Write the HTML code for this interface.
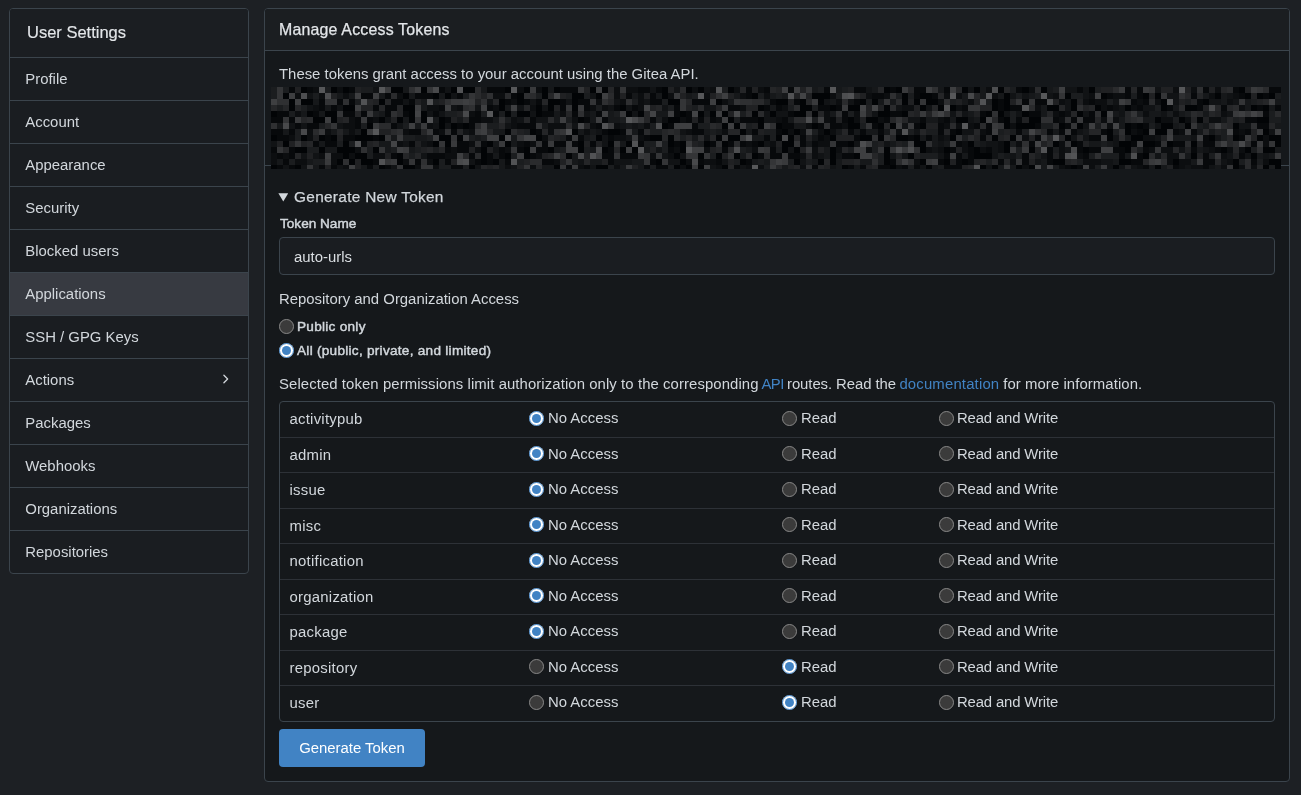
<!DOCTYPE html>
<html>
<head>
<meta charset="utf-8">
<style>
html,body{margin:0;padding:0}
body{width:1301px;height:795px;overflow:hidden;background:#1d2024;font-family:"Liberation Sans",sans-serif;color:#d2d7dc;position:relative;font-size:14.9px}
#wrap{position:absolute;left:0;top:0;width:1301px;height:795px;will-change:transform}
.abs{position:absolute}
/* sidebar */
#menu{left:9px;top:8px;width:238px;height:564px;border:1px solid #3b444c;border-radius:4px;background:#1a1d21;overflow:hidden}
#menu .hd{height:48px;line-height:46px;padding-left:17px;font-size:16.5px;-webkit-text-stroke:0.15px #e3e6e9;color:#e3e6e9;background:#1b1e22}
#menu .it{height:42px;border-top:1px solid #3b444c;line-height:42px;padding-left:15.3px;font-size:14.9px;color:#d2d7dc;position:relative}
#menu .it.act{background:#373a41}
#menu .chev{position:absolute;left:207.8px;top:12.7px}
/* main */
#main{left:264px;top:8px;width:1024px;height:772px;border:1px solid #3b444c;border-radius:4px;background:#15181b;overflow:hidden}
#main .hd{height:41px;border-bottom:1px solid #3b444c;background:#1b1e21;line-height:41px;padding-left:14px;font-size:15.9px;letter-spacing:0.2px;-webkit-text-stroke:0.25px #e3e6e9;color:#e3e6e9}
.txt{position:absolute;white-space:nowrap;line-height:16px}
#mos{position:absolute;left:6px;top:78px}
#sep{position:absolute;left:0;top:156px;width:1024px;height:1px;background:#3b444c}
#seg1{position:absolute;left:0;top:42px;width:1024px;height:114px;background:#15181b}
.input{position:absolute;left:14px;top:228px;width:994px;height:36px;border:1px solid #3b444c;border-radius:4px;background:#1a1d21}
input[type=radio]{color-scheme:dark;accent-color:#4183c4;width:15px;height:15px;margin:0;position:absolute}
#tbl{position:absolute;left:14px;top:392px;width:994px;height:319px;border:1px solid #3b444c;border-radius:4px;background:#15181b}
.sep{position:absolute;left:0;width:994px;height:1px;background:#2d3137}
.btn{position:absolute;left:14px;top:720px;width:146px;height:38px;border-radius:4px;background:#4183c4;color:#fff;font-size:14.9px;line-height:38px;text-align:center}
a{color:#4183c4;text-decoration:none}
</style>
</head>
<body>
<div id="wrap">
<div id="menu" class="abs">
  <div class="hd">User Settings</div>
  <div class="it">Profile</div>
  <div class="it">Account</div>
  <div class="it">Appearance</div>
  <div class="it">Security</div>
  <div class="it">Blocked users</div>
  <div class="it act">Applications</div>
  <div class="it">SSH / GPG Keys</div>
  <div class="it">Actions<svg class="chev" width="14" height="14" viewBox="0 0 16 16"><path fill="#d2d7dc" d="M6.22 3.22a.75.75 0 0 1 1.06 0l4.25 4.25a.75.75 0 0 1 0 1.06l-4.25 4.25a.751.751 0 0 1-1.042-.018.751.751 0 0 1-.018-1.042L9.94 8 6.22 4.28a.75.75 0 0 1 0-1.06Z"/></svg></div>
  <div class="it">Packages</div>
  <div class="it">Webhooks</div>
  <div class="it">Organizations</div>
  <div class="it">Repositories</div>
</div>
<div id="main" class="abs">
  <div class="hd">Manage Access Tokens</div>
  <div id="seg1"></div>
  <div class="txt" style="left:14px;top:57px">These tokens grant access to your account using the Gitea API.</div>
  <div id="sep"></div>
  <div id="mos"><svg width="1010" height="82" viewBox="0 0 168 13.6667" preserveAspectRatio="none" shape-rendering="crispEdges" style="display:block"><path fill="#020406" d="M5 0h1v1h-1zM10 0h1v1h-1zM12 0h1v1h-1zM20 0h1v1h-1zM21 0h1v1h-1zM25 0h1v1h-1zM30 0h1v1h-1zM32 0h1v1h-1zM33 0h1v1h-1zM39 0h1v1h-1zM42 0h1v1h-1zM45 0h1v1h-1zM47 0h1v1h-1zM53 0h1v1h-1zM55 0h1v1h-1zM65 0h1v1h-1zM69 0h1v1h-1zM71 0h1v1h-1zM76 0h1v1h-1zM102 0h1v1h-1zM104 0h1v1h-1zM115 0h1v1h-1zM117 0h1v1h-1zM121 0h1v1h-1zM125 0h1v1h-1zM128 0h1v1h-1zM136 0h1v1h-1zM161 0h1v1h-1zM2 1h1v1h-1zM22 1h1v1h-1zM27 1h1v1h-1zM29 1h1v1h-1zM41 1h1v1h-1zM45 1h1v1h-1zM50 1h1v1h-1zM51 1h1v1h-1zM54 1h1v1h-1zM65 1h1v1h-1zM80 1h1v1h-1zM90 1h1v1h-1zM91 1h1v1h-1zM92 1h1v1h-1zM105 1h1v1h-1zM108 1h1v1h-1zM109 1h1v1h-1zM122 1h1v1h-1zM132 1h1v1h-1zM138 1h1v1h-1zM145 1h1v1h-1zM147 1h1v1h-1zM157 1h1v1h-1zM162 1h1v1h-1zM164 1h1v1h-1zM166 1h1v1h-1zM3 2h1v1h-1zM5 2h1v1h-1zM6 2h1v1h-1zM18 2h1v1h-1zM38 2h1v1h-1zM41 2h1v1h-1zM46 2h1v1h-1zM47 2h1v1h-1zM50 2h1v1h-1zM66 2h1v1h-1zM67 2h1v1h-1zM74 2h1v1h-1zM84 2h1v1h-1zM85 2h1v1h-1zM88 2h1v1h-1zM91 2h1v1h-1zM98 2h1v1h-1zM100 2h1v1h-1zM105 2h1v1h-1zM107 2h1v1h-1zM109 2h1v1h-1zM110 2h1v1h-1zM120 2h1v1h-1zM122 2h1v1h-1zM133 2h1v1h-1zM148 2h1v1h-1zM155 2h1v1h-1zM3 3h1v1h-1zM12 3h1v1h-1zM13 3h1v1h-1zM22 3h1v1h-1zM23 3h1v1h-1zM38 3h1v1h-1zM44 3h1v1h-1zM46 3h1v1h-1zM50 3h1v1h-1zM58 3h1v1h-1zM81 3h1v1h-1zM88 3h1v1h-1zM89 3h1v1h-1zM93 3h1v1h-1zM96 3h1v1h-1zM97 3h1v1h-1zM102 3h1v1h-1zM108 3h1v1h-1zM111 3h1v1h-1zM113 3h1v1h-1zM120 3h1v1h-1zM122 3h1v1h-1zM129 3h1v1h-1zM130 3h1v1h-1zM133 3h1v1h-1zM137 3h1v1h-1zM142 3h1v1h-1zM148 3h1v1h-1zM152 3h1v1h-1zM153 3h1v1h-1zM163 3h1v1h-1zM165 3h1v1h-1zM0 4h1v1h-1zM6 4h1v1h-1zM9 4h1v1h-1zM10 4h1v1h-1zM23 4h1v1h-1zM25 4h1v1h-1zM39 4h1v1h-1zM41 4h1v1h-1zM42 4h1v1h-1zM44 4h1v1h-1zM59 4h1v1h-1zM61 4h1v1h-1zM68 4h1v1h-1zM71 4h1v1h-1zM73 4h1v1h-1zM75 4h1v1h-1zM80 4h1v1h-1zM83 4h1v1h-1zM87 4h1v1h-1zM88 4h1v1h-1zM90 4h1v1h-1zM101 4h1v1h-1zM102 4h1v1h-1zM105 4h1v1h-1zM119 4h1v1h-1zM121 4h1v1h-1zM125 4h1v1h-1zM134 4h1v1h-1zM138 4h1v1h-1zM7 5h1v1h-1zM8 5h1v1h-1zM10 5h1v1h-1zM18 5h1v1h-1zM21 5h1v1h-1zM23 5h1v1h-1zM25 5h1v1h-1zM28 5h1v1h-1zM51 5h1v1h-1zM66 5h1v1h-1zM67 5h1v1h-1zM76 5h1v1h-1zM81 5h1v1h-1zM96 5h1v1h-1zM99 5h1v1h-1zM100 5h1v1h-1zM114 5h1v1h-1zM115 5h1v1h-1zM118 5h1v1h-1zM122 5h1v1h-1zM126 5h1v1h-1zM127 5h1v1h-1zM147 5h1v1h-1zM151 5h1v1h-1zM154 5h1v1h-1zM164 5h1v1h-1zM165 5h1v1h-1zM16 6h1v1h-1zM28 6h1v1h-1zM30 6h1v1h-1zM32 6h1v1h-1zM65 6h1v1h-1zM75 6h1v1h-1zM77 6h1v1h-1zM81 6h1v1h-1zM84 6h1v1h-1zM90 6h1v1h-1zM96 6h1v1h-1zM97 6h1v1h-1zM101 6h1v1h-1zM103 6h1v1h-1zM108 6h1v1h-1zM122 6h1v1h-1zM124 6h1v1h-1zM125 6h1v1h-1zM126 6h1v1h-1zM131 6h1v1h-1zM134 6h1v1h-1zM142 6h1v1h-1zM144 6h1v1h-1zM148 6h1v1h-1zM149 6h1v1h-1zM152 6h1v1h-1zM160 6h1v1h-1zM15 7h1v1h-1zM39 7h1v1h-1zM43 7h1v1h-1zM50 7h1v1h-1zM56 7h1v1h-1zM57 7h1v1h-1zM78 7h1v1h-1zM85 7h1v1h-1zM87 7h1v1h-1zM92 7h1v1h-1zM114 7h1v1h-1zM139 7h1v1h-1zM142 7h1v1h-1zM145 7h1v1h-1zM147 7h1v1h-1zM148 7h1v1h-1zM165 7h1v1h-1zM0 8h1v1h-1zM5 8h1v1h-1zM8 8h1v1h-1zM10 8h1v1h-1zM14 8h1v1h-1zM15 8h1v1h-1zM16 8h1v1h-1zM18 8h1v1h-1zM28 8h1v1h-1zM29 8h1v1h-1zM31 8h1v1h-1zM38 8h1v1h-1zM44 8h1v1h-1zM54 8h1v1h-1zM63 8h1v1h-1zM64 8h1v1h-1zM66 8h1v1h-1zM74 8h1v1h-1zM76 8h1v1h-1zM77 8h1v1h-1zM84 8h1v1h-1zM86 8h1v1h-1zM93 8h1v1h-1zM98 8h1v1h-1zM99 8h1v1h-1zM101 8h1v1h-1zM104 8h1v1h-1zM105 8h1v1h-1zM107 8h1v1h-1zM113 8h1v1h-1zM120 8h1v1h-1zM123 8h1v1h-1zM132 8h1v1h-1zM139 8h1v1h-1zM143 8h1v1h-1zM144 8h1v1h-1zM156 8h1v1h-1zM160 8h1v1h-1zM164 8h1v1h-1zM166 8h1v1h-1zM167 8h1v1h-1zM2 9h1v1h-1zM12 9h1v1h-1zM27 9h1v1h-1zM29 9h1v1h-1zM36 9h1v1h-1zM39 9h1v1h-1zM51 9h1v1h-1zM56 9h1v1h-1zM59 9h1v1h-1zM66 9h1v1h-1zM68 9h1v1h-1zM72 9h1v1h-1zM75 9h1v1h-1zM81 9h1v1h-1zM85 9h1v1h-1zM86 9h1v1h-1zM96 9h1v1h-1zM107 9h1v1h-1zM108 9h1v1h-1zM116 9h1v1h-1zM122 9h1v1h-1zM130 9h1v1h-1zM133 9h1v1h-1zM141 9h1v1h-1zM142 9h1v1h-1zM145 9h1v1h-1zM146 9h1v1h-1zM149 9h1v1h-1zM153 9h1v1h-1zM167 9h1v1h-1zM4 10h1v1h-1zM5 10h1v1h-1zM8 10h1v1h-1zM11 10h1v1h-1zM12 10h1v1h-1zM13 10h1v1h-1zM17 10h1v1h-1zM35 10h1v1h-1zM42 10h1v1h-1zM46 10h1v1h-1zM51 10h1v1h-1zM55 10h1v1h-1zM58 10h1v1h-1zM60 10h1v1h-1zM68 10h1v1h-1zM85 10h1v1h-1zM87 10h1v1h-1zM93 10h1v1h-1zM102 10h1v1h-1zM108 10h1v1h-1zM112 10h1v1h-1zM117 10h1v1h-1zM122 10h1v1h-1zM126 10h1v1h-1zM135 10h1v1h-1zM142 10h1v1h-1zM158 10h1v1h-1zM162 10h1v1h-1zM165 10h1v1h-1zM166 10h1v1h-1zM12 11h1v1h-1zM14 11h1v1h-1zM15 11h1v1h-1zM21 11h1v1h-1zM35 11h1v1h-1zM39 11h1v1h-1zM42 11h1v1h-1zM49 11h1v1h-1zM67 11h1v1h-1zM71 11h1v1h-1zM74 11h1v1h-1zM77 11h1v1h-1zM80 11h1v1h-1zM93 11h1v1h-1zM97 11h1v1h-1zM102 11h1v1h-1zM106 11h1v1h-1zM117 11h1v1h-1zM118 11h1v1h-1zM119 11h1v1h-1zM145 11h1v1h-1zM153 11h1v1h-1zM163 11h1v1h-1zM11 12h1v1h-1zM13 12h1v1h-1zM15 12h1v1h-1zM16 12h1v1h-1zM21 12h1v1h-1zM27 12h1v1h-1zM35 12h1v1h-1zM37 12h1v1h-1zM64 12h1v1h-1zM68 12h1v1h-1zM78 12h1v1h-1zM87 12h1v1h-1zM91 12h1v1h-1zM93 12h1v1h-1zM102 12h1v1h-1zM108 12h1v1h-1zM112 12h1v1h-1zM115 12h1v1h-1zM130 12h1v1h-1zM131 12h1v1h-1zM141 12h1v1h-1zM142 12h1v1h-1zM150 12h1v1h-1zM160 12h1v1h-1zM166 12h1v1h-1zM167 12h1v1h-1zM0 13h1v1h-1zM4 13h1v1h-1zM18 13h1v1h-1zM22 13h1v1h-1zM23 13h1v1h-1zM33 13h1v1h-1zM47 13h1v1h-1zM54 13h1v1h-1zM55 13h1v1h-1zM67 13h1v1h-1zM69 13h1v1h-1zM71 13h1v1h-1zM75 13h1v1h-1zM95 13h1v1h-1zM103 13h1v1h-1zM109 13h1v1h-1zM118 13h1v1h-1zM120 13h1v1h-1zM124 13h1v1h-1zM126 13h1v1h-1zM133 13h1v1h-1zM140 13h1v1h-1zM147 13h1v1h-1zM160 13h1v1h-1zM165 13h1v1h-1zM167 13h1v1h-1z"/><path fill="#07090b" d="M3 0h1v1h-1zM6 0h1v1h-1zM13 0h1v1h-1zM28 0h1v1h-1zM36 0h1v1h-1zM37 0h1v1h-1zM38 0h1v1h-1zM48 0h1v1h-1zM49 0h1v1h-1zM50 0h1v1h-1zM61 0h1v1h-1zM62 0h1v1h-1zM64 0h1v1h-1zM79 0h1v1h-1zM82 0h1v1h-1zM86 0h1v1h-1zM92 0h1v1h-1zM97 0h1v1h-1zM98 0h1v1h-1zM103 0h1v1h-1zM107 0h1v1h-1zM108 0h1v1h-1zM112 0h1v1h-1zM124 0h1v1h-1zM134 0h1v1h-1zM142 0h1v1h-1zM144 0h1v1h-1zM155 0h1v1h-1zM160 0h1v1h-1zM166 0h1v1h-1zM167 0h1v1h-1zM15 1h1v1h-1zM16 1h1v1h-1zM19 1h1v1h-1zM24 1h1v1h-1zM25 1h1v1h-1zM26 1h1v1h-1zM31 1h1v1h-1zM40 1h1v1h-1zM59 1h1v1h-1zM63 1h1v1h-1zM79 1h1v1h-1zM100 1h1v1h-1zM101 1h1v1h-1zM107 1h1v1h-1zM110 1h1v1h-1zM139 1h1v1h-1zM142 1h1v1h-1zM144 1h1v1h-1zM153 1h1v1h-1zM161 1h1v1h-1zM165 1h1v1h-1zM8 2h1v1h-1zM11 2h1v1h-1zM13 2h1v1h-1zM20 2h1v1h-1zM21 2h1v1h-1zM23 2h1v1h-1zM39 2h1v1h-1zM42 2h1v1h-1zM44 2h1v1h-1zM48 2h1v1h-1zM51 2h1v1h-1zM52 2h1v1h-1zM63 2h1v1h-1zM64 2h1v1h-1zM70 2h1v1h-1zM71 2h1v1h-1zM72 2h1v1h-1zM83 2h1v1h-1zM87 2h1v1h-1zM97 2h1v1h-1zM121 2h1v1h-1zM125 2h1v1h-1zM127 2h1v1h-1zM128 2h1v1h-1zM136 2h1v1h-1zM143 2h1v1h-1zM145 2h1v1h-1zM154 2h1v1h-1zM8 3h1v1h-1zM10 3h1v1h-1zM17 3h1v1h-1zM19 3h1v1h-1zM20 3h1v1h-1zM28 3h1v1h-1zM36 3h1v1h-1zM48 3h1v1h-1zM52 3h1v1h-1zM57 3h1v1h-1zM60 3h1v1h-1zM67 3h1v1h-1zM76 3h1v1h-1zM77 3h1v1h-1zM82 3h1v1h-1zM84 3h1v1h-1zM91 3h1v1h-1zM92 3h1v1h-1zM94 3h1v1h-1zM115 3h1v1h-1zM121 3h1v1h-1zM123 3h1v1h-1zM124 3h1v1h-1zM139 3h1v1h-1zM144 3h1v1h-1zM149 3h1v1h-1zM154 3h1v1h-1zM158 3h1v1h-1zM164 3h1v1h-1zM167 3h1v1h-1zM1 4h1v1h-1zM2 4h1v1h-1zM7 4h1v1h-1zM12 4h1v1h-1zM13 4h1v1h-1zM15 4h1v1h-1zM19 4h1v1h-1zM22 4h1v1h-1zM27 4h1v1h-1zM34 4h1v1h-1zM37 4h1v1h-1zM45 4h1v1h-1zM46 4h1v1h-1zM50 4h1v1h-1zM54 4h1v1h-1zM67 4h1v1h-1zM69 4h1v1h-1zM86 4h1v1h-1zM95 4h1v1h-1zM103 4h1v1h-1zM104 4h1v1h-1zM118 4h1v1h-1zM126 4h1v1h-1zM127 4h1v1h-1zM131 4h1v1h-1zM136 4h1v1h-1zM165 4h1v1h-1zM0 5h1v1h-1zM1 5h1v1h-1zM3 5h1v1h-1zM14 5h1v1h-1zM16 5h1v1h-1zM29 5h1v1h-1zM33 5h1v1h-1zM34 5h1v1h-1zM43 5h1v1h-1zM52 5h1v1h-1zM55 5h1v1h-1zM63 5h1v1h-1zM69 5h1v1h-1zM71 5h1v1h-1zM73 5h1v1h-1zM78 5h1v1h-1zM79 5h1v1h-1zM80 5h1v1h-1zM85 5h1v1h-1zM93 5h1v1h-1zM95 5h1v1h-1zM102 5h1v1h-1zM108 5h1v1h-1zM112 5h1v1h-1zM121 5h1v1h-1zM124 5h1v1h-1zM130 5h1v1h-1zM133 5h1v1h-1zM135 5h1v1h-1zM136 5h1v1h-1zM162 5h1v1h-1zM163 5h1v1h-1zM4 6h1v1h-1zM6 6h1v1h-1zM7 6h1v1h-1zM14 6h1v1h-1zM20 6h1v1h-1zM31 6h1v1h-1zM33 6h1v1h-1zM41 6h1v1h-1zM42 6h1v1h-1zM43 6h1v1h-1zM54 6h1v1h-1zM66 6h1v1h-1zM70 6h1v1h-1zM85 6h1v1h-1zM86 6h1v1h-1zM91 6h1v1h-1zM93 6h1v1h-1zM94 6h1v1h-1zM100 6h1v1h-1zM107 6h1v1h-1zM111 6h1v1h-1zM117 6h1v1h-1zM119 6h1v1h-1zM127 6h1v1h-1zM132 6h1v1h-1zM143 6h1v1h-1zM145 6h1v1h-1zM164 6h1v1h-1zM165 6h1v1h-1zM0 7h1v1h-1zM1 7h1v1h-1zM3 7h1v1h-1zM23 7h1v1h-1zM24 7h1v1h-1zM27 7h1v1h-1zM30 7h1v1h-1zM44 7h1v1h-1zM55 7h1v1h-1zM58 7h1v1h-1zM61 7h1v1h-1zM70 7h1v1h-1zM71 7h1v1h-1zM80 7h1v1h-1zM84 7h1v1h-1zM96 7h1v1h-1zM98 7h1v1h-1zM101 7h1v1h-1zM111 7h1v1h-1zM113 7h1v1h-1zM119 7h1v1h-1zM124 7h1v1h-1zM129 7h1v1h-1zM131 7h1v1h-1zM133 7h1v1h-1zM138 7h1v1h-1zM144 7h1v1h-1zM150 7h1v1h-1zM153 7h1v1h-1zM160 7h1v1h-1zM162 7h1v1h-1zM1 8h1v1h-1zM2 8h1v1h-1zM9 8h1v1h-1zM12 8h1v1h-1zM13 8h1v1h-1zM17 8h1v1h-1zM49 8h1v1h-1zM51 8h1v1h-1zM56 8h1v1h-1zM62 8h1v1h-1zM82 8h1v1h-1zM88 8h1v1h-1zM91 8h1v1h-1zM97 8h1v1h-1zM106 8h1v1h-1zM109 8h1v1h-1zM118 8h1v1h-1zM127 8h1v1h-1zM136 8h1v1h-1zM137 8h1v1h-1zM155 8h1v1h-1zM161 8h1v1h-1zM7 9h1v1h-1zM9 9h1v1h-1zM10 9h1v1h-1zM15 9h1v1h-1zM23 9h1v1h-1zM31 9h1v1h-1zM32 9h1v1h-1zM35 9h1v1h-1zM42 9h1v1h-1zM45 9h1v1h-1zM47 9h1v1h-1zM48 9h1v1h-1zM50 9h1v1h-1zM53 9h1v1h-1zM61 9h1v1h-1zM67 9h1v1h-1zM73 9h1v1h-1zM76 9h1v1h-1zM78 9h1v1h-1zM80 9h1v1h-1zM88 9h1v1h-1zM90 9h1v1h-1zM94 9h1v1h-1zM95 9h1v1h-1zM114 9h1v1h-1zM126 9h1v1h-1zM134 9h1v1h-1zM143 9h1v1h-1zM147 9h1v1h-1zM150 9h1v1h-1zM151 9h1v1h-1zM155 9h1v1h-1zM156 9h1v1h-1zM163 9h1v1h-1zM0 10h1v1h-1zM3 10h1v1h-1zM29 10h1v1h-1zM31 10h1v1h-1zM32 10h1v1h-1zM38 10h1v1h-1zM41 10h1v1h-1zM44 10h1v1h-1zM45 10h1v1h-1zM56 10h1v1h-1zM66 10h1v1h-1zM75 10h1v1h-1zM83 10h1v1h-1zM113 10h1v1h-1zM116 10h1v1h-1zM119 10h1v1h-1zM129 10h1v1h-1zM134 10h1v1h-1zM136 10h1v1h-1zM137 10h1v1h-1zM140 10h1v1h-1zM141 10h1v1h-1zM145 10h1v1h-1zM153 10h1v1h-1zM157 10h1v1h-1zM1 11h1v1h-1zM3 11h1v1h-1zM20 11h1v1h-1zM26 11h1v1h-1zM27 11h1v1h-1zM28 11h1v1h-1zM33 11h1v1h-1zM36 11h1v1h-1zM38 11h1v1h-1zM43 11h1v1h-1zM55 11h1v1h-1zM56 11h1v1h-1zM58 11h1v1h-1zM59 11h1v1h-1zM60 11h1v1h-1zM81 11h1v1h-1zM83 11h1v1h-1zM84 11h1v1h-1zM86 11h1v1h-1zM87 11h1v1h-1zM95 11h1v1h-1zM96 11h1v1h-1zM112 11h1v1h-1zM114 11h1v1h-1zM116 11h1v1h-1zM125 11h1v1h-1zM129 11h1v1h-1zM135 11h1v1h-1zM141 11h1v1h-1zM144 11h1v1h-1zM155 11h1v1h-1zM161 11h1v1h-1zM2 12h1v1h-1zM17 12h1v1h-1zM24 12h1v1h-1zM29 12h1v1h-1zM34 12h1v1h-1zM36 12h1v1h-1zM39 12h1v1h-1zM45 12h1v1h-1zM46 12h1v1h-1zM56 12h1v1h-1zM63 12h1v1h-1zM71 12h1v1h-1zM74 12h1v1h-1zM79 12h1v1h-1zM103 12h1v1h-1zM111 12h1v1h-1zM114 12h1v1h-1zM116 12h1v1h-1zM121 12h1v1h-1zM125 12h1v1h-1zM129 12h1v1h-1zM143 12h1v1h-1zM144 12h1v1h-1zM155 12h1v1h-1zM156 12h1v1h-1zM163 12h1v1h-1zM1 13h1v1h-1zM3 13h1v1h-1zM8 13h1v1h-1zM10 13h1v1h-1zM16 13h1v1h-1zM19 13h1v1h-1zM30 13h1v1h-1zM31 13h1v1h-1zM49 13h1v1h-1zM52 13h1v1h-1zM62 13h1v1h-1zM64 13h1v1h-1zM65 13h1v1h-1zM77 13h1v1h-1zM90 13h1v1h-1zM96 13h1v1h-1zM98 13h1v1h-1zM101 13h1v1h-1zM102 13h1v1h-1zM105 13h1v1h-1zM107 13h1v1h-1zM112 13h1v1h-1zM113 13h1v1h-1zM114 13h1v1h-1zM132 13h1v1h-1zM134 13h1v1h-1zM145 13h1v1h-1zM150 13h1v1h-1zM155 13h1v1h-1z"/><path fill="#0c0e10" d="M7 0h1v1h-1zM11 0h1v1h-1zM41 0h1v1h-1zM44 0h1v1h-1zM57 0h1v1h-1zM59 0h1v1h-1zM60 0h1v1h-1zM70 0h1v1h-1zM73 0h1v1h-1zM77 0h1v1h-1zM81 0h1v1h-1zM119 0h1v1h-1zM126 0h1v1h-1zM150 0h1v1h-1zM153 0h1v1h-1zM157 0h1v1h-1zM4 1h1v1h-1zM8 1h1v1h-1zM12 1h1v1h-1zM21 1h1v1h-1zM37 1h1v1h-1zM38 1h1v1h-1zM57 1h1v1h-1zM61 1h1v1h-1zM66 1h1v1h-1zM72 1h1v1h-1zM78 1h1v1h-1zM82 1h1v1h-1zM93 1h1v1h-1zM99 1h1v1h-1zM102 1h1v1h-1zM112 1h1v1h-1zM114 1h1v1h-1zM120 1h1v1h-1zM130 1h1v1h-1zM136 1h1v1h-1zM140 1h1v1h-1zM141 1h1v1h-1zM156 1h1v1h-1zM160 1h1v1h-1zM40 2h1v1h-1zM54 2h1v1h-1zM58 2h1v1h-1zM61 2h1v1h-1zM75 2h1v1h-1zM94 2h1v1h-1zM111 2h1v1h-1zM116 2h1v1h-1zM131 2h1v1h-1zM135 2h1v1h-1zM137 2h1v1h-1zM138 2h1v1h-1zM144 2h1v1h-1zM147 2h1v1h-1zM159 2h1v1h-1zM7 3h1v1h-1zM26 3h1v1h-1zM27 3h1v1h-1zM31 3h1v1h-1zM37 3h1v1h-1zM43 3h1v1h-1zM53 3h1v1h-1zM55 3h1v1h-1zM61 3h1v1h-1zM78 3h1v1h-1zM85 3h1v1h-1zM105 3h1v1h-1zM106 3h1v1h-1zM114 3h1v1h-1zM127 3h1v1h-1zM138 3h1v1h-1zM140 3h1v1h-1zM143 3h1v1h-1zM161 3h1v1h-1zM4 4h1v1h-1zM33 4h1v1h-1zM48 4h1v1h-1zM92 4h1v1h-1zM97 4h1v1h-1zM130 4h1v1h-1zM132 4h1v1h-1zM145 4h1v1h-1zM150 4h1v1h-1zM158 4h1v1h-1zM13 5h1v1h-1zM17 5h1v1h-1zM35 5h1v1h-1zM36 5h1v1h-1zM40 5h1v1h-1zM50 5h1v1h-1zM65 5h1v1h-1zM68 5h1v1h-1zM74 5h1v1h-1zM84 5h1v1h-1zM92 5h1v1h-1zM97 5h1v1h-1zM101 5h1v1h-1zM111 5h1v1h-1zM131 5h1v1h-1zM138 5h1v1h-1zM140 5h1v1h-1zM148 5h1v1h-1zM149 5h1v1h-1zM152 5h1v1h-1zM156 5h1v1h-1zM157 5h1v1h-1zM12 6h1v1h-1zM13 6h1v1h-1zM26 6h1v1h-1zM40 6h1v1h-1zM46 6h1v1h-1zM47 6h1v1h-1zM48 6h1v1h-1zM53 6h1v1h-1zM57 6h1v1h-1zM62 6h1v1h-1zM89 6h1v1h-1zM95 6h1v1h-1zM112 6h1v1h-1zM114 6h1v1h-1zM116 6h1v1h-1zM123 6h1v1h-1zM139 6h1v1h-1zM6 7h1v1h-1zM9 7h1v1h-1zM13 7h1v1h-1zM22 7h1v1h-1zM28 7h1v1h-1zM33 7h1v1h-1zM46 7h1v1h-1zM52 7h1v1h-1zM69 7h1v1h-1zM75 7h1v1h-1zM86 7h1v1h-1zM88 7h1v1h-1zM91 7h1v1h-1zM93 7h1v1h-1zM104 7h1v1h-1zM118 7h1v1h-1zM143 7h1v1h-1zM151 7h1v1h-1zM161 7h1v1h-1zM3 8h1v1h-1zM6 8h1v1h-1zM45 8h1v1h-1zM57 8h1v1h-1zM58 8h1v1h-1zM61 8h1v1h-1zM92 8h1v1h-1zM111 8h1v1h-1zM125 8h1v1h-1zM145 8h1v1h-1zM146 8h1v1h-1zM165 8h1v1h-1zM21 9h1v1h-1zM26 9h1v1h-1zM33 9h1v1h-1zM41 9h1v1h-1zM43 9h1v1h-1zM79 9h1v1h-1zM83 9h1v1h-1zM91 9h1v1h-1zM92 9h1v1h-1zM115 9h1v1h-1zM121 9h1v1h-1zM124 9h1v1h-1zM131 9h1v1h-1zM165 9h1v1h-1zM14 10h1v1h-1zM30 10h1v1h-1zM34 10h1v1h-1zM39 10h1v1h-1zM67 10h1v1h-1zM72 10h1v1h-1zM80 10h1v1h-1zM90 10h1v1h-1zM94 10h1v1h-1zM99 10h1v1h-1zM109 10h1v1h-1zM111 10h1v1h-1zM115 10h1v1h-1zM118 10h1v1h-1zM121 10h1v1h-1zM131 10h1v1h-1zM146 10h1v1h-1zM148 10h1v1h-1zM149 10h1v1h-1zM156 10h1v1h-1zM159 10h1v1h-1zM161 10h1v1h-1zM0 11h1v1h-1zM2 11h1v1h-1zM8 11h1v1h-1zM10 11h1v1h-1zM11 11h1v1h-1zM13 11h1v1h-1zM17 11h1v1h-1zM18 11h1v1h-1zM29 11h1v1h-1zM30 11h1v1h-1zM44 11h1v1h-1zM63 11h1v1h-1zM66 11h1v1h-1zM88 11h1v1h-1zM90 11h1v1h-1zM131 11h1v1h-1zM134 11h1v1h-1zM149 11h1v1h-1zM150 11h1v1h-1zM158 11h1v1h-1zM0 12h1v1h-1zM4 12h1v1h-1zM5 12h1v1h-1zM10 12h1v1h-1zM22 12h1v1h-1zM26 12h1v1h-1zM47 12h1v1h-1zM69 12h1v1h-1zM72 12h1v1h-1zM73 12h1v1h-1zM107 12h1v1h-1zM123 12h1v1h-1zM135 12h1v1h-1zM136 12h1v1h-1zM137 12h1v1h-1zM149 12h1v1h-1zM151 12h1v1h-1zM152 12h1v1h-1zM159 12h1v1h-1zM165 12h1v1h-1zM12 13h1v1h-1zM24 13h1v1h-1zM27 13h1v1h-1zM39 13h1v1h-1zM43 13h1v1h-1zM51 13h1v1h-1zM57 13h1v1h-1zM68 13h1v1h-1zM74 13h1v1h-1zM79 13h1v1h-1zM81 13h1v1h-1zM88 13h1v1h-1zM104 13h1v1h-1zM125 13h1v1h-1zM131 13h1v1h-1zM136 13h1v1h-1zM144 13h1v1h-1zM151 13h1v1h-1zM153 13h1v1h-1zM154 13h1v1h-1zM158 13h1v1h-1zM161 13h1v1h-1zM163 13h1v1h-1z"/><path fill="#111315" d="M17 0h1v1h-1zM29 0h1v1h-1zM63 0h1v1h-1zM67 0h1v1h-1zM72 0h1v1h-1zM99 0h1v1h-1zM116 0h1v1h-1zM132 0h1v1h-1zM133 0h1v1h-1zM135 0h1v1h-1zM147 0h1v1h-1zM6 1h1v1h-1zM30 1h1v1h-1zM53 1h1v1h-1zM123 1h1v1h-1zM125 1h1v1h-1zM129 1h1v1h-1zM135 1h1v1h-1zM149 1h1v1h-1zM150 1h1v1h-1zM159 1h1v1h-1zM22 2h1v1h-1zM36 2h1v1h-1zM43 2h1v1h-1zM49 2h1v1h-1zM57 2h1v1h-1zM62 2h1v1h-1zM92 2h1v1h-1zM96 2h1v1h-1zM132 2h1v1h-1zM140 2h1v1h-1zM150 2h1v1h-1zM156 2h1v1h-1zM157 2h1v1h-1zM160 2h1v1h-1zM6 3h1v1h-1zM11 3h1v1h-1zM30 3h1v1h-1zM34 3h1v1h-1zM41 3h1v1h-1zM45 3h1v1h-1zM56 3h1v1h-1zM59 3h1v1h-1zM65 3h1v1h-1zM72 3h1v1h-1zM73 3h1v1h-1zM104 3h1v1h-1zM109 3h1v1h-1zM132 3h1v1h-1zM141 3h1v1h-1zM145 3h1v1h-1zM146 3h1v1h-1zM26 4h1v1h-1zM28 4h1v1h-1zM43 4h1v1h-1zM52 4h1v1h-1zM60 4h1v1h-1zM82 4h1v1h-1zM84 4h1v1h-1zM85 4h1v1h-1zM100 4h1v1h-1zM113 4h1v1h-1zM115 4h1v1h-1zM122 4h1v1h-1zM124 4h1v1h-1zM135 4h1v1h-1zM141 4h1v1h-1zM148 4h1v1h-1zM159 4h1v1h-1zM19 5h1v1h-1zM41 5h1v1h-1zM44 5h1v1h-1zM45 5h1v1h-1zM82 5h1v1h-1zM83 5h1v1h-1zM106 5h1v1h-1zM107 5h1v1h-1zM116 5h1v1h-1zM3 6h1v1h-1zM5 6h1v1h-1zM11 6h1v1h-1zM21 6h1v1h-1zM27 6h1v1h-1zM29 6h1v1h-1zM39 6h1v1h-1zM50 6h1v1h-1zM58 6h1v1h-1zM60 6h1v1h-1zM105 6h1v1h-1zM135 6h1v1h-1zM147 6h1v1h-1zM161 6h1v1h-1zM162 6h1v1h-1zM32 7h1v1h-1zM54 7h1v1h-1zM68 7h1v1h-1zM107 7h1v1h-1zM115 7h1v1h-1zM116 7h1v1h-1zM134 7h1v1h-1zM166 7h1v1h-1zM55 8h1v1h-1zM59 8h1v1h-1zM72 8h1v1h-1zM90 8h1v1h-1zM112 8h1v1h-1zM133 8h1v1h-1zM135 8h1v1h-1zM140 8h1v1h-1zM147 8h1v1h-1zM153 8h1v1h-1zM157 8h1v1h-1zM0 9h1v1h-1zM22 9h1v1h-1zM25 9h1v1h-1zM55 9h1v1h-1zM82 9h1v1h-1zM97 9h1v1h-1zM102 9h1v1h-1zM111 9h1v1h-1zM119 9h1v1h-1zM120 9h1v1h-1zM140 9h1v1h-1zM37 10h1v1h-1zM64 10h1v1h-1zM86 10h1v1h-1zM110 10h1v1h-1zM120 10h1v1h-1zM132 10h1v1h-1zM151 10h1v1h-1zM155 10h1v1h-1zM5 11h1v1h-1zM7 11h1v1h-1zM25 11h1v1h-1zM65 11h1v1h-1zM68 11h1v1h-1zM91 11h1v1h-1zM94 11h1v1h-1zM103 11h1v1h-1zM105 11h1v1h-1zM111 11h1v1h-1zM120 11h1v1h-1zM123 11h1v1h-1zM128 11h1v1h-1zM147 11h1v1h-1zM159 11h1v1h-1zM162 11h1v1h-1zM165 11h1v1h-1zM33 12h1v1h-1zM51 12h1v1h-1zM57 12h1v1h-1zM58 12h1v1h-1zM59 12h1v1h-1zM66 12h1v1h-1zM67 12h1v1h-1zM75 12h1v1h-1zM88 12h1v1h-1zM127 12h1v1h-1zM138 12h1v1h-1zM139 12h1v1h-1zM158 12h1v1h-1zM2 13h1v1h-1zM5 13h1v1h-1zM11 13h1v1h-1zM20 13h1v1h-1zM34 13h1v1h-1zM40 13h1v1h-1zM53 13h1v1h-1zM73 13h1v1h-1zM78 13h1v1h-1zM93 13h1v1h-1zM108 13h1v1h-1zM119 13h1v1h-1zM139 13h1v1h-1zM141 13h1v1h-1zM143 13h1v1h-1zM152 13h1v1h-1zM156 13h1v1h-1z"/><path fill="#16181a" d="M22 0h1v1h-1zM35 0h1v1h-1zM46 0h1v1h-1zM90 0h1v1h-1zM94 0h1v1h-1zM100 0h1v1h-1zM111 0h1v1h-1zM118 0h1v1h-1zM129 0h1v1h-1zM11 1h1v1h-1zM13 1h1v1h-1zM18 1h1v1h-1zM23 1h1v1h-1zM28 1h1v1h-1zM60 1h1v1h-1zM64 1h1v1h-1zM69 1h1v1h-1zM77 1h1v1h-1zM83 1h1v1h-1zM85 1h1v1h-1zM115 1h1v1h-1zM118 1h1v1h-1zM121 1h1v1h-1zM126 1h1v1h-1zM155 1h1v1h-1zM158 1h1v1h-1zM7 2h1v1h-1zM25 2h1v1h-1zM76 2h1v1h-1zM93 2h1v1h-1zM101 2h1v1h-1zM103 2h1v1h-1zM115 2h1v1h-1zM158 2h1v1h-1zM162 2h1v1h-1zM167 2h1v1h-1zM9 3h1v1h-1zM25 3h1v1h-1zM39 3h1v1h-1zM83 3h1v1h-1zM128 3h1v1h-1zM150 3h1v1h-1zM162 3h1v1h-1zM166 3h1v1h-1zM5 4h1v1h-1zM8 4h1v1h-1zM18 4h1v1h-1zM47 4h1v1h-1zM53 4h1v1h-1zM56 4h1v1h-1zM64 4h1v1h-1zM65 4h1v1h-1zM72 4h1v1h-1zM93 4h1v1h-1zM116 4h1v1h-1zM128 4h1v1h-1zM140 4h1v1h-1zM146 4h1v1h-1zM147 4h1v1h-1zM151 4h1v1h-1zM155 4h1v1h-1zM22 5h1v1h-1zM27 5h1v1h-1zM31 5h1v1h-1zM37 5h1v1h-1zM47 5h1v1h-1zM53 5h1v1h-1zM56 5h1v1h-1zM57 5h1v1h-1zM86 5h1v1h-1zM109 5h1v1h-1zM110 5h1v1h-1zM113 5h1v1h-1zM117 5h1v1h-1zM141 5h1v1h-1zM145 5h1v1h-1zM146 5h1v1h-1zM158 5h1v1h-1zM1 6h1v1h-1zM24 6h1v1h-1zM45 6h1v1h-1zM59 6h1v1h-1zM61 6h1v1h-1zM87 6h1v1h-1zM88 6h1v1h-1zM141 6h1v1h-1zM150 6h1v1h-1zM155 6h1v1h-1zM167 6h1v1h-1zM2 7h1v1h-1zM10 7h1v1h-1zM12 7h1v1h-1zM14 7h1v1h-1zM37 7h1v1h-1zM38 7h1v1h-1zM51 7h1v1h-1zM53 7h1v1h-1zM60 7h1v1h-1zM72 7h1v1h-1zM74 7h1v1h-1zM79 7h1v1h-1zM94 7h1v1h-1zM97 7h1v1h-1zM99 7h1v1h-1zM100 7h1v1h-1zM102 7h1v1h-1zM130 7h1v1h-1zM135 7h1v1h-1zM154 7h1v1h-1zM156 7h1v1h-1zM20 8h1v1h-1zM24 8h1v1h-1zM25 8h1v1h-1zM34 8h1v1h-1zM40 8h1v1h-1zM52 8h1v1h-1zM70 8h1v1h-1zM80 8h1v1h-1zM81 8h1v1h-1zM108 8h1v1h-1zM110 8h1v1h-1zM142 8h1v1h-1zM150 8h1v1h-1zM151 8h1v1h-1zM152 8h1v1h-1zM8 9h1v1h-1zM18 9h1v1h-1zM19 9h1v1h-1zM37 9h1v1h-1zM40 9h1v1h-1zM58 9h1v1h-1zM89 9h1v1h-1zM103 9h1v1h-1zM110 9h1v1h-1zM112 9h1v1h-1zM118 9h1v1h-1zM136 9h1v1h-1zM137 9h1v1h-1zM139 9h1v1h-1zM9 10h1v1h-1zM10 10h1v1h-1zM19 10h1v1h-1zM23 10h1v1h-1zM47 10h1v1h-1zM53 10h1v1h-1zM62 10h1v1h-1zM79 10h1v1h-1zM92 10h1v1h-1zM154 10h1v1h-1zM167 10h1v1h-1zM37 11h1v1h-1zM50 11h1v1h-1zM78 11h1v1h-1zM92 11h1v1h-1zM115 11h1v1h-1zM122 11h1v1h-1zM142 11h1v1h-1zM152 11h1v1h-1zM164 11h1v1h-1zM166 11h1v1h-1zM1 12h1v1h-1zM6 12h1v1h-1zM38 12h1v1h-1zM50 12h1v1h-1zM53 12h1v1h-1zM54 12h1v1h-1zM60 12h1v1h-1zM61 12h1v1h-1zM80 12h1v1h-1zM82 12h1v1h-1zM90 12h1v1h-1zM94 12h1v1h-1zM98 12h1v1h-1zM99 12h1v1h-1zM128 12h1v1h-1zM140 12h1v1h-1zM153 12h1v1h-1zM7 13h1v1h-1zM15 13h1v1h-1zM38 13h1v1h-1zM45 13h1v1h-1zM46 13h1v1h-1zM58 13h1v1h-1zM61 13h1v1h-1zM85 13h1v1h-1zM94 13h1v1h-1zM97 13h1v1h-1zM110 13h1v1h-1zM121 13h1v1h-1zM123 13h1v1h-1zM128 13h1v1h-1zM146 13h1v1h-1zM148 13h1v1h-1zM157 13h1v1h-1z"/><path fill="#1b1d1f" d="M0 0h1v1h-1zM2 0h1v1h-1zM9 0h1v1h-1zM15 0h1v1h-1zM16 0h1v1h-1zM75 0h1v1h-1zM91 0h1v1h-1zM95 0h1v1h-1zM123 0h1v1h-1zM130 0h1v1h-1zM137 0h1v1h-1zM0 1h1v1h-1zM7 1h1v1h-1zM32 1h1v1h-1zM44 1h1v1h-1zM49 1h1v1h-1zM52 1h1v1h-1zM70 1h1v1h-1zM81 1h1v1h-1zM84 1h1v1h-1zM94 1h1v1h-1zM104 1h1v1h-1zM106 1h1v1h-1zM124 1h1v1h-1zM127 1h1v1h-1zM133 1h1v1h-1zM134 1h1v1h-1zM143 1h1v1h-1zM167 1h1v1h-1zM14 2h1v1h-1zM27 2h1v1h-1zM60 2h1v1h-1zM65 2h1v1h-1zM82 2h1v1h-1zM99 2h1v1h-1zM113 2h1v1h-1zM119 2h1v1h-1zM139 2h1v1h-1zM152 2h1v1h-1zM163 2h1v1h-1zM1 3h1v1h-1zM5 3h1v1h-1zM54 3h1v1h-1zM66 3h1v1h-1zM70 3h1v1h-1zM86 3h1v1h-1zM90 3h1v1h-1zM147 3h1v1h-1zM3 4h1v1h-1zM17 4h1v1h-1zM29 4h1v1h-1zM30 4h1v1h-1zM35 4h1v1h-1zM38 4h1v1h-1zM40 4h1v1h-1zM57 4h1v1h-1zM78 4h1v1h-1zM96 4h1v1h-1zM123 4h1v1h-1zM144 4h1v1h-1zM149 4h1v1h-1zM152 4h1v1h-1zM166 4h1v1h-1zM39 5h1v1h-1zM49 5h1v1h-1zM58 5h1v1h-1zM64 5h1v1h-1zM77 5h1v1h-1zM90 5h1v1h-1zM123 5h1v1h-1zM150 5h1v1h-1zM160 5h1v1h-1zM166 5h1v1h-1zM167 5h1v1h-1zM8 6h1v1h-1zM15 6h1v1h-1zM22 6h1v1h-1zM36 6h1v1h-1zM37 6h1v1h-1zM63 6h1v1h-1zM71 6h1v1h-1zM72 6h1v1h-1zM79 6h1v1h-1zM98 6h1v1h-1zM128 6h1v1h-1zM129 6h1v1h-1zM137 6h1v1h-1zM146 6h1v1h-1zM151 6h1v1h-1zM154 6h1v1h-1zM4 7h1v1h-1zM42 7h1v1h-1zM63 7h1v1h-1zM64 7h1v1h-1zM73 7h1v1h-1zM82 7h1v1h-1zM83 7h1v1h-1zM90 7h1v1h-1zM106 7h1v1h-1zM109 7h1v1h-1zM110 7h1v1h-1zM121 7h1v1h-1zM123 7h1v1h-1zM125 7h1v1h-1zM140 7h1v1h-1zM158 7h1v1h-1zM4 8h1v1h-1zM22 8h1v1h-1zM23 8h1v1h-1zM26 8h1v1h-1zM33 8h1v1h-1zM35 8h1v1h-1zM48 8h1v1h-1zM53 8h1v1h-1zM68 8h1v1h-1zM83 8h1v1h-1zM115 8h1v1h-1zM158 8h1v1h-1zM11 9h1v1h-1zM13 9h1v1h-1zM62 9h1v1h-1zM63 9h1v1h-1zM65 9h1v1h-1zM71 9h1v1h-1zM100 9h1v1h-1zM105 9h1v1h-1zM117 9h1v1h-1zM123 9h1v1h-1zM138 9h1v1h-1zM6 10h1v1h-1zM7 10h1v1h-1zM16 10h1v1h-1zM20 10h1v1h-1zM24 10h1v1h-1zM27 10h1v1h-1zM48 10h1v1h-1zM52 10h1v1h-1zM65 10h1v1h-1zM78 10h1v1h-1zM84 10h1v1h-1zM96 10h1v1h-1zM100 10h1v1h-1zM124 10h1v1h-1zM130 10h1v1h-1zM144 10h1v1h-1zM163 10h1v1h-1zM16 11h1v1h-1zM23 11h1v1h-1zM40 11h1v1h-1zM73 11h1v1h-1zM101 11h1v1h-1zM108 11h1v1h-1zM109 11h1v1h-1zM110 11h1v1h-1zM121 11h1v1h-1zM124 11h1v1h-1zM127 11h1v1h-1zM136 11h1v1h-1zM138 11h1v1h-1zM139 11h1v1h-1zM140 11h1v1h-1zM156 11h1v1h-1zM3 12h1v1h-1zM7 12h1v1h-1zM8 12h1v1h-1zM28 12h1v1h-1zM41 12h1v1h-1zM77 12h1v1h-1zM81 12h1v1h-1zM86 12h1v1h-1zM89 12h1v1h-1zM101 12h1v1h-1zM119 12h1v1h-1zM134 12h1v1h-1zM161 12h1v1h-1zM164 12h1v1h-1zM17 13h1v1h-1zM28 13h1v1h-1zM29 13h1v1h-1zM32 13h1v1h-1zM56 13h1v1h-1zM63 13h1v1h-1zM66 13h1v1h-1zM82 13h1v1h-1zM106 13h1v1h-1zM111 13h1v1h-1zM130 13h1v1h-1zM137 13h1v1h-1zM166 13h1v1h-1z"/><path fill="#202123" d="M4 0h1v1h-1zM14 0h1v1h-1zM52 0h1v1h-1zM66 0h1v1h-1zM80 0h1v1h-1zM84 0h1v1h-1zM88 0h1v1h-1zM96 0h1v1h-1zM138 0h1v1h-1zM139 0h1v1h-1zM148 0h1v1h-1zM149 0h1v1h-1zM152 0h1v1h-1zM156 0h1v1h-1zM162 0h1v1h-1zM10 1h1v1h-1zM35 1h1v1h-1zM48 1h1v1h-1zM58 1h1v1h-1zM62 1h1v1h-1zM68 1h1v1h-1zM73 1h1v1h-1zM76 1h1v1h-1zM87 1h1v1h-1zM89 1h1v1h-1zM98 1h1v1h-1zM146 1h1v1h-1zM163 1h1v1h-1zM17 2h1v1h-1zM24 2h1v1h-1zM28 2h1v1h-1zM34 2h1v1h-1zM86 2h1v1h-1zM106 2h1v1h-1zM114 2h1v1h-1zM117 2h1v1h-1zM123 2h1v1h-1zM130 2h1v1h-1zM134 2h1v1h-1zM151 2h1v1h-1zM164 2h1v1h-1zM15 3h1v1h-1zM16 3h1v1h-1zM47 3h1v1h-1zM63 3h1v1h-1zM69 3h1v1h-1zM74 3h1v1h-1zM79 3h1v1h-1zM80 3h1v1h-1zM99 3h1v1h-1zM101 3h1v1h-1zM107 3h1v1h-1zM118 3h1v1h-1zM119 3h1v1h-1zM135 3h1v1h-1zM155 3h1v1h-1zM31 4h1v1h-1zM76 4h1v1h-1zM99 4h1v1h-1zM107 4h1v1h-1zM109 4h1v1h-1zM117 4h1v1h-1zM157 4h1v1h-1zM11 5h1v1h-1zM20 5h1v1h-1zM30 5h1v1h-1zM70 5h1v1h-1zM72 5h1v1h-1zM94 5h1v1h-1zM98 5h1v1h-1zM125 5h1v1h-1zM155 5h1v1h-1zM161 5h1v1h-1zM80 6h1v1h-1zM109 6h1v1h-1zM110 6h1v1h-1zM18 7h1v1h-1zM19 7h1v1h-1zM41 7h1v1h-1zM81 7h1v1h-1zM122 7h1v1h-1zM157 7h1v1h-1zM163 7h1v1h-1zM7 8h1v1h-1zM11 8h1v1h-1zM47 8h1v1h-1zM89 8h1v1h-1zM94 8h1v1h-1zM95 8h1v1h-1zM96 8h1v1h-1zM117 8h1v1h-1zM121 8h1v1h-1zM126 8h1v1h-1zM148 8h1v1h-1zM163 8h1v1h-1zM1 9h1v1h-1zM3 9h1v1h-1zM5 9h1v1h-1zM16 9h1v1h-1zM24 9h1v1h-1zM52 9h1v1h-1zM54 9h1v1h-1zM70 9h1v1h-1zM84 9h1v1h-1zM101 9h1v1h-1zM104 9h1v1h-1zM128 9h1v1h-1zM135 9h1v1h-1zM154 9h1v1h-1zM25 10h1v1h-1zM33 10h1v1h-1zM36 10h1v1h-1zM63 10h1v1h-1zM73 10h1v1h-1zM88 10h1v1h-1zM91 10h1v1h-1zM114 10h1v1h-1zM127 10h1v1h-1zM152 10h1v1h-1zM6 11h1v1h-1zM19 11h1v1h-1zM45 11h1v1h-1zM52 11h1v1h-1zM75 11h1v1h-1zM104 11h1v1h-1zM107 11h1v1h-1zM130 11h1v1h-1zM154 11h1v1h-1zM160 11h1v1h-1zM14 12h1v1h-1zM30 12h1v1h-1zM42 12h1v1h-1zM48 12h1v1h-1zM55 12h1v1h-1zM76 12h1v1h-1zM95 12h1v1h-1zM96 12h1v1h-1zM113 12h1v1h-1zM117 12h1v1h-1zM126 12h1v1h-1zM132 12h1v1h-1zM9 13h1v1h-1zM14 13h1v1h-1zM36 13h1v1h-1zM41 13h1v1h-1zM60 13h1v1h-1zM86 13h1v1h-1zM92 13h1v1h-1zM99 13h1v1h-1zM115 13h1v1h-1zM149 13h1v1h-1z"/><path fill="#252628" d="M56 0h1v1h-1zM78 0h1v1h-1zM83 0h1v1h-1zM101 0h1v1h-1zM106 0h1v1h-1zM114 0h1v1h-1zM122 0h1v1h-1zM143 0h1v1h-1zM158 0h1v1h-1zM46 1h1v1h-1zM111 1h1v1h-1zM117 1h1v1h-1zM152 1h1v1h-1zM154 1h1v1h-1zM16 2h1v1h-1zM19 2h1v1h-1zM37 2h1v1h-1zM45 2h1v1h-1zM56 2h1v1h-1zM69 2h1v1h-1zM89 2h1v1h-1zM153 2h1v1h-1zM165 2h1v1h-1zM0 3h1v1h-1zM2 3h1v1h-1zM4 3h1v1h-1zM18 3h1v1h-1zM21 3h1v1h-1zM42 3h1v1h-1zM64 3h1v1h-1zM110 3h1v1h-1zM131 3h1v1h-1zM136 3h1v1h-1zM157 3h1v1h-1zM159 3h1v1h-1zM14 4h1v1h-1zM21 4h1v1h-1zM49 4h1v1h-1zM62 4h1v1h-1zM91 4h1v1h-1zM106 4h1v1h-1zM114 4h1v1h-1zM129 4h1v1h-1zM133 4h1v1h-1zM142 4h1v1h-1zM154 4h1v1h-1zM156 4h1v1h-1zM5 5h1v1h-1zM12 5h1v1h-1zM32 5h1v1h-1zM42 5h1v1h-1zM62 5h1v1h-1zM103 5h1v1h-1zM105 5h1v1h-1zM120 5h1v1h-1zM137 5h1v1h-1zM142 5h1v1h-1zM153 5h1v1h-1zM159 5h1v1h-1zM9 6h1v1h-1zM38 6h1v1h-1zM52 6h1v1h-1zM74 6h1v1h-1zM102 6h1v1h-1zM159 6h1v1h-1zM166 6h1v1h-1zM11 7h1v1h-1zM25 7h1v1h-1zM31 7h1v1h-1zM36 7h1v1h-1zM45 7h1v1h-1zM65 7h1v1h-1zM67 7h1v1h-1zM76 7h1v1h-1zM77 7h1v1h-1zM95 7h1v1h-1zM108 7h1v1h-1zM112 7h1v1h-1zM117 7h1v1h-1zM128 7h1v1h-1zM136 7h1v1h-1zM137 7h1v1h-1zM46 8h1v1h-1zM65 8h1v1h-1zM69 8h1v1h-1zM73 8h1v1h-1zM87 8h1v1h-1zM103 8h1v1h-1zM119 8h1v1h-1zM122 8h1v1h-1zM129 8h1v1h-1zM131 8h1v1h-1zM134 8h1v1h-1zM159 8h1v1h-1zM6 9h1v1h-1zM17 9h1v1h-1zM159 9h1v1h-1zM2 10h1v1h-1zM26 10h1v1h-1zM28 10h1v1h-1zM57 10h1v1h-1zM74 10h1v1h-1zM76 10h1v1h-1zM95 10h1v1h-1zM150 10h1v1h-1zM160 10h1v1h-1zM4 11h1v1h-1zM22 11h1v1h-1zM24 11h1v1h-1zM32 11h1v1h-1zM46 11h1v1h-1zM89 11h1v1h-1zM100 11h1v1h-1zM126 11h1v1h-1zM148 11h1v1h-1zM52 12h1v1h-1zM92 12h1v1h-1zM97 12h1v1h-1zM118 12h1v1h-1zM122 12h1v1h-1zM133 12h1v1h-1zM145 12h1v1h-1zM157 12h1v1h-1zM35 13h1v1h-1zM37 13h1v1h-1zM44 13h1v1h-1zM76 13h1v1h-1zM84 13h1v1h-1zM87 13h1v1h-1zM91 13h1v1h-1zM100 13h1v1h-1zM116 13h1v1h-1zM142 13h1v1h-1zM164 13h1v1h-1z"/><path fill="#2a2b2d" d="M34 0h1v1h-1zM68 0h1v1h-1zM127 0h1v1h-1zM140 0h1v1h-1zM159 0h1v1h-1zM165 0h1v1h-1zM20 1h1v1h-1zM34 1h1v1h-1zM39 1h1v1h-1zM43 1h1v1h-1zM56 1h1v1h-1zM97 1h1v1h-1zM80 2h1v1h-1zM81 2h1v1h-1zM95 2h1v1h-1zM104 2h1v1h-1zM146 2h1v1h-1zM32 3h1v1h-1zM71 3h1v1h-1zM87 3h1v1h-1zM103 3h1v1h-1zM126 3h1v1h-1zM151 3h1v1h-1zM160 3h1v1h-1zM79 4h1v1h-1zM81 4h1v1h-1zM153 4h1v1h-1zM167 4h1v1h-1zM6 5h1v1h-1zM46 5h1v1h-1zM87 5h1v1h-1zM88 5h1v1h-1zM143 5h1v1h-1zM18 6h1v1h-1zM19 6h1v1h-1zM34 6h1v1h-1zM49 6h1v1h-1zM73 6h1v1h-1zM113 6h1v1h-1zM118 6h1v1h-1zM130 6h1v1h-1zM156 6h1v1h-1zM158 6h1v1h-1zM7 7h1v1h-1zM20 7h1v1h-1zM40 7h1v1h-1zM62 7h1v1h-1zM66 7h1v1h-1zM155 7h1v1h-1zM67 8h1v1h-1zM71 8h1v1h-1zM116 8h1v1h-1zM141 8h1v1h-1zM77 9h1v1h-1zM129 9h1v1h-1zM152 9h1v1h-1zM160 9h1v1h-1zM162 9h1v1h-1zM143 10h1v1h-1zM34 11h1v1h-1zM48 11h1v1h-1zM79 11h1v1h-1zM82 11h1v1h-1zM146 11h1v1h-1zM43 12h1v1h-1zM44 12h1v1h-1zM104 12h1v1h-1zM120 12h1v1h-1zM162 12h1v1h-1zM162 13h1v1h-1z"/><path fill="#2f3032" d="M23 0h1v1h-1zM110 0h1v1h-1zM154 0h1v1h-1zM36 1h1v1h-1zM42 1h1v1h-1zM74 1h1v1h-1zM103 1h1v1h-1zM151 1h1v1h-1zM1 2h1v1h-1zM2 2h1v1h-1zM12 2h1v1h-1zM29 2h1v1h-1zM35 2h1v1h-1zM55 2h1v1h-1zM59 2h1v1h-1zM78 2h1v1h-1zM79 2h1v1h-1zM112 2h1v1h-1zM33 3h1v1h-1zM134 3h1v1h-1zM20 4h1v1h-1zM51 4h1v1h-1zM89 4h1v1h-1zM94 4h1v1h-1zM112 4h1v1h-1zM120 4h1v1h-1zM137 4h1v1h-1zM38 5h1v1h-1zM128 5h1v1h-1zM129 5h1v1h-1zM132 5h1v1h-1zM144 5h1v1h-1zM0 6h1v1h-1zM83 6h1v1h-1zM92 6h1v1h-1zM163 6h1v1h-1zM21 7h1v1h-1zM29 7h1v1h-1zM47 7h1v1h-1zM127 7h1v1h-1zM141 7h1v1h-1zM100 8h1v1h-1zM34 9h1v1h-1zM74 9h1v1h-1zM109 9h1v1h-1zM125 9h1v1h-1zM148 9h1v1h-1zM157 9h1v1h-1zM15 10h1v1h-1zM107 10h1v1h-1zM164 10h1v1h-1zM137 11h1v1h-1zM12 12h1v1h-1zM25 12h1v1h-1zM100 12h1v1h-1zM106 12h1v1h-1zM148 12h1v1h-1zM89 13h1v1h-1z"/><path fill="#343537" d="M1 0h1v1h-1zM26 0h1v1h-1zM51 0h1v1h-1zM58 0h1v1h-1zM89 0h1v1h-1zM146 0h1v1h-1zM164 0h1v1h-1zM1 1h1v1h-1zM33 1h1v1h-1zM131 1h1v1h-1zM148 1h1v1h-1zM9 2h1v1h-1zM10 2h1v1h-1zM53 2h1v1h-1zM68 2h1v1h-1zM77 2h1v1h-1zM102 2h1v1h-1zM108 2h1v1h-1zM124 2h1v1h-1zM126 2h1v1h-1zM142 2h1v1h-1zM161 2h1v1h-1zM49 3h1v1h-1zM68 3h1v1h-1zM116 3h1v1h-1zM117 3h1v1h-1zM11 4h1v1h-1zM143 4h1v1h-1zM162 4h1v1h-1zM2 5h1v1h-1zM24 5h1v1h-1zM104 5h1v1h-1zM10 6h1v1h-1zM44 6h1v1h-1zM99 6h1v1h-1zM121 6h1v1h-1zM133 6h1v1h-1zM138 6h1v1h-1zM153 6h1v1h-1zM48 7h1v1h-1zM103 7h1v1h-1zM19 8h1v1h-1zM30 8h1v1h-1zM41 8h1v1h-1zM102 8h1v1h-1zM114 8h1v1h-1zM4 9h1v1h-1zM28 9h1v1h-1zM44 9h1v1h-1zM57 9h1v1h-1zM87 9h1v1h-1zM93 9h1v1h-1zM132 9h1v1h-1zM166 9h1v1h-1zM1 10h1v1h-1zM18 10h1v1h-1zM40 10h1v1h-1zM82 10h1v1h-1zM101 10h1v1h-1zM103 10h1v1h-1zM147 10h1v1h-1zM57 11h1v1h-1zM62 11h1v1h-1zM64 11h1v1h-1zM69 11h1v1h-1zM70 11h1v1h-1zM72 11h1v1h-1zM76 11h1v1h-1zM151 11h1v1h-1zM157 11h1v1h-1zM19 12h1v1h-1zM23 12h1v1h-1zM49 12h1v1h-1zM62 12h1v1h-1zM65 12h1v1h-1zM83 12h1v1h-1zM124 12h1v1h-1zM6 13h1v1h-1zM21 13h1v1h-1zM25 13h1v1h-1zM26 13h1v1h-1zM42 13h1v1h-1zM48 13h1v1h-1zM159 13h1v1h-1z"/><path fill="#393a3c" d="M19 0h1v1h-1zM43 0h1v1h-1zM105 0h1v1h-1zM141 0h1v1h-1zM145 0h1v1h-1zM163 0h1v1h-1zM67 1h1v1h-1zM30 2h1v1h-1zM31 2h1v1h-1zM33 2h1v1h-1zM90 2h1v1h-1zM51 3h1v1h-1zM75 3h1v1h-1zM95 3h1v1h-1zM16 4h1v1h-1zM58 4h1v1h-1zM108 4h1v1h-1zM110 4h1v1h-1zM160 4h1v1h-1zM164 4h1v1h-1zM4 5h1v1h-1zM15 5h1v1h-1zM61 5h1v1h-1zM134 5h1v1h-1zM139 5h1v1h-1zM17 6h1v1h-1zM25 6h1v1h-1zM56 6h1v1h-1zM78 6h1v1h-1zM106 6h1v1h-1zM120 6h1v1h-1zM8 7h1v1h-1zM16 7h1v1h-1zM26 7h1v1h-1zM34 7h1v1h-1zM59 7h1v1h-1zM132 7h1v1h-1zM149 7h1v1h-1zM164 7h1v1h-1zM21 8h1v1h-1zM50 8h1v1h-1zM60 8h1v1h-1zM75 8h1v1h-1zM78 8h1v1h-1zM124 8h1v1h-1zM162 8h1v1h-1zM30 9h1v1h-1zM38 9h1v1h-1zM46 9h1v1h-1zM69 9h1v1h-1zM113 9h1v1h-1zM164 9h1v1h-1zM22 10h1v1h-1zM81 10h1v1h-1zM89 10h1v1h-1zM105 10h1v1h-1zM123 10h1v1h-1zM125 10h1v1h-1zM61 11h1v1h-1zM85 11h1v1h-1zM167 11h1v1h-1zM9 12h1v1h-1zM20 12h1v1h-1zM85 12h1v1h-1zM109 12h1v1h-1zM146 12h1v1h-1zM154 12h1v1h-1zM50 13h1v1h-1zM59 13h1v1h-1zM70 13h1v1h-1zM83 13h1v1h-1zM122 13h1v1h-1zM138 13h1v1h-1z"/><path fill="#3e3f41" d="M24 0h1v1h-1zM54 0h1v1h-1zM85 0h1v1h-1zM87 0h1v1h-1zM109 0h1v1h-1zM113 0h1v1h-1zM131 0h1v1h-1zM3 1h1v1h-1zM14 1h1v1h-1zM17 1h1v1h-1zM55 1h1v1h-1zM75 1h1v1h-1zM137 1h1v1h-1zM0 2h1v1h-1zM4 2h1v1h-1zM32 2h1v1h-1zM73 2h1v1h-1zM141 2h1v1h-1zM166 2h1v1h-1zM14 3h1v1h-1zM24 3h1v1h-1zM29 3h1v1h-1zM35 3h1v1h-1zM40 3h1v1h-1zM55 4h1v1h-1zM66 4h1v1h-1zM74 4h1v1h-1zM98 4h1v1h-1zM161 4h1v1h-1zM9 5h1v1h-1zM48 5h1v1h-1zM54 5h1v1h-1zM75 5h1v1h-1zM91 5h1v1h-1zM23 6h1v1h-1zM35 6h1v1h-1zM67 6h1v1h-1zM68 6h1v1h-1zM69 6h1v1h-1zM76 6h1v1h-1zM82 6h1v1h-1zM104 6h1v1h-1zM136 6h1v1h-1zM157 6h1v1h-1zM35 7h1v1h-1zM89 7h1v1h-1zM120 7h1v1h-1zM146 7h1v1h-1zM152 7h1v1h-1zM167 7h1v1h-1zM27 8h1v1h-1zM32 8h1v1h-1zM36 8h1v1h-1zM37 8h1v1h-1zM128 8h1v1h-1zM138 8h1v1h-1zM149 8h1v1h-1zM154 8h1v1h-1zM49 9h1v1h-1zM64 9h1v1h-1zM99 9h1v1h-1zM106 9h1v1h-1zM144 9h1v1h-1zM158 9h1v1h-1zM21 10h1v1h-1zM43 10h1v1h-1zM49 10h1v1h-1zM50 10h1v1h-1zM59 10h1v1h-1zM70 10h1v1h-1zM71 10h1v1h-1zM97 10h1v1h-1zM98 10h1v1h-1zM138 10h1v1h-1zM139 10h1v1h-1zM9 11h1v1h-1zM31 11h1v1h-1zM41 11h1v1h-1zM47 11h1v1h-1zM54 11h1v1h-1zM98 11h1v1h-1zM99 11h1v1h-1zM113 11h1v1h-1zM84 12h1v1h-1zM105 12h1v1h-1zM110 12h1v1h-1zM147 12h1v1h-1zM13 13h1v1h-1zM72 13h1v1h-1zM135 13h1v1h-1z"/><path fill="#434446" d="M47 1h1v1h-1zM88 1h1v1h-1zM62 3h1v1h-1zM98 3h1v1h-1zM100 3h1v1h-1zM24 4h1v1h-1zM63 4h1v1h-1zM70 4h1v1h-1zM111 4h1v1h-1zM139 4h1v1h-1zM163 4h1v1h-1zM119 5h1v1h-1zM140 6h1v1h-1zM126 7h1v1h-1zM42 8h1v1h-1zM43 8h1v1h-1zM20 9h1v1h-1zM127 9h1v1h-1zM129 13h1v1h-1z"/><path fill="#48494b" d="M27 0h1v1h-1zM116 1h1v1h-1zM156 3h1v1h-1zM32 4h1v1h-1zM77 4h1v1h-1zM60 5h1v1h-1zM2 6h1v1h-1zM51 6h1v1h-1zM5 7h1v1h-1zM159 7h1v1h-1zM85 8h1v1h-1zM161 9h1v1h-1zM54 10h1v1h-1zM133 10h1v1h-1zM51 11h1v1h-1zM31 12h1v1h-1zM70 12h1v1h-1zM127 13h1v1h-1z"/><path fill="#4d4e50" d="M120 0h1v1h-1zM5 1h1v1h-1zM9 1h1v1h-1zM95 1h1v1h-1zM129 2h1v1h-1zM89 5h1v1h-1zM64 6h1v1h-1zM39 8h1v1h-1zM98 9h1v1h-1zM77 10h1v1h-1zM104 10h1v1h-1zM106 10h1v1h-1zM132 11h1v1h-1zM143 11h1v1h-1zM32 12h1v1h-1z"/><path fill="#525355" d="M31 0h1v1h-1zM74 0h1v1h-1zM86 1h1v1h-1zM96 1h1v1h-1zM15 2h1v1h-1zM26 2h1v1h-1zM118 2h1v1h-1zM112 3h1v1h-1zM125 3h1v1h-1zM26 5h1v1h-1zM55 6h1v1h-1zM49 7h1v1h-1zM105 7h1v1h-1zM79 8h1v1h-1zM14 9h1v1h-1zM60 9h1v1h-1zM128 10h1v1h-1zM53 11h1v1h-1zM133 11h1v1h-1zM18 12h1v1h-1zM40 12h1v1h-1zM117 13h1v1h-1z"/><path fill="#57585a" d="M8 0h1v1h-1zM18 0h1v1h-1zM40 0h1v1h-1zM93 0h1v1h-1zM151 0h1v1h-1zM71 1h1v1h-1zM113 1h1v1h-1zM119 1h1v1h-1zM128 1h1v1h-1zM149 2h1v1h-1zM36 4h1v1h-1zM59 5h1v1h-1zM115 6h1v1h-1zM17 7h1v1h-1zM130 8h1v1h-1zM61 10h1v1h-1zM69 10h1v1h-1zM80 13h1v1h-1z"/></svg></div>
  <svg style="position:absolute;left:13px;top:184px" width="11" height="9" viewBox="0 0 11 9"><path d="M0.4 0.3H10.2L5.3 8.4Z" fill="#d2d7dc"/></svg>
  <div class="txt" style="left:29px;top:179.5px;font-size:15.4px;letter-spacing:0.3px;-webkit-text-stroke:0.25px #d2d7dc">Generate New Token</div>
  <div class="txt" style="left:15px;top:207px;font-size:13.6px;-webkit-text-stroke:0.45px #d2d7dc">Token Name</div>
  <div class="input"><div class="txt" style="left:14px;top:11px;color:#dbdfe3">auto-urls</div></div>
  <div class="txt" style="left:14px;top:281.5px">Repository and Organization Access</div>
  <input type="radio" name="ra" style="left:14px;top:310px">
  <div class="txt" style="left:32px;top:310px;font-size:13.6px;letter-spacing:0.27px;-webkit-text-stroke:0.45px #d2d7dc">Public only</div>
  <input type="radio" name="ra" checked style="left:14px;top:334px">
  <div class="txt" style="left:32px;top:334px;font-size:13.6px;letter-spacing:0.27px;-webkit-text-stroke:0.45px #d2d7dc">All (public, private, and limited)</div>
  <div class="txt" style="left:14px;top:366.5px;letter-spacing:0.085px">Selected token permissions limit authorization only to the corresponding</div>
  <div class="txt" style="left:496.5px;top:366.5px;letter-spacing:-0.6px;color:#4183c4">API</div>
  <div class="txt" style="left:522px;top:366.5px;letter-spacing:-0.07px">routes. Read the</div>
  <div class="txt" style="left:634.4px;top:366.5px;letter-spacing:0.17px;color:#4183c4">documentation</div>
  <div class="txt" style="left:738.2px;top:366.5px;letter-spacing:0.08px">for more information.</div>
  <div id="tbl"><div class="txt" style="left:9.5px;top:9px;letter-spacing:0.25px">activitypub</div>
<input type="radio" name="s0" checked style="left:249px;top:9px">
<div class="txt" style="left:268px;top:8px">No Access</div>
<input type="radio" name="s0" style="left:502px;top:9px">
<div class="txt" style="left:521px;top:8px">Read</div>
<input type="radio" name="s0" style="left:659px;top:9px">
<div class="txt" style="left:677px;top:8px;letter-spacing:-0.15px">Read and Write</div>
<div class="sep" style="top:35px"></div>
<div class="txt" style="left:9.5px;top:45px;letter-spacing:0.25px">admin</div>
<input type="radio" name="s1" checked style="left:249px;top:44px">
<div class="txt" style="left:268px;top:44px">No Access</div>
<input type="radio" name="s1" style="left:502px;top:44px">
<div class="txt" style="left:521px;top:44px">Read</div>
<input type="radio" name="s1" style="left:659px;top:44px">
<div class="txt" style="left:677px;top:44px;letter-spacing:-0.15px">Read and Write</div>
<div class="sep" style="top:70px"></div>
<div class="txt" style="left:9.5px;top:80px;letter-spacing:0.25px">issue</div>
<input type="radio" name="s2" checked style="left:249px;top:80px">
<div class="txt" style="left:268px;top:79px">No Access</div>
<input type="radio" name="s2" style="left:502px;top:80px">
<div class="txt" style="left:521px;top:79px">Read</div>
<input type="radio" name="s2" style="left:659px;top:80px">
<div class="txt" style="left:677px;top:79px;letter-spacing:-0.15px">Read and Write</div>
<div class="sep" style="top:106px"></div>
<div class="txt" style="left:9.5px;top:116px;letter-spacing:0.25px">misc</div>
<input type="radio" name="s3" checked style="left:249px;top:115px">
<div class="txt" style="left:268px;top:115px">No Access</div>
<input type="radio" name="s3" style="left:502px;top:115px">
<div class="txt" style="left:521px;top:115px">Read</div>
<input type="radio" name="s3" style="left:659px;top:115px">
<div class="txt" style="left:677px;top:115px;letter-spacing:-0.15px">Read and Write</div>
<div class="sep" style="top:141px"></div>
<div class="txt" style="left:9.5px;top:151px;letter-spacing:0.25px">notification</div>
<input type="radio" name="s4" checked style="left:249px;top:151px">
<div class="txt" style="left:268px;top:150px">No Access</div>
<input type="radio" name="s4" style="left:502px;top:151px">
<div class="txt" style="left:521px;top:150px">Read</div>
<input type="radio" name="s4" style="left:659px;top:151px">
<div class="txt" style="left:677px;top:150px;letter-spacing:-0.15px">Read and Write</div>
<div class="sep" style="top:177px"></div>
<div class="txt" style="left:9.5px;top:187px;letter-spacing:0.25px">organization</div>
<input type="radio" name="s5" checked style="left:249px;top:186px">
<div class="txt" style="left:268px;top:186px">No Access</div>
<input type="radio" name="s5" style="left:502px;top:186px">
<div class="txt" style="left:521px;top:186px">Read</div>
<input type="radio" name="s5" style="left:659px;top:186px">
<div class="txt" style="left:677px;top:186px;letter-spacing:-0.15px">Read and Write</div>
<div class="sep" style="top:212px"></div>
<div class="txt" style="left:9.5px;top:222px;letter-spacing:0.25px">package</div>
<input type="radio" name="s6" checked style="left:249px;top:222px">
<div class="txt" style="left:268px;top:221px">No Access</div>
<input type="radio" name="s6" style="left:502px;top:222px">
<div class="txt" style="left:521px;top:221px">Read</div>
<input type="radio" name="s6" style="left:659px;top:222px">
<div class="txt" style="left:677px;top:221px;letter-spacing:-0.15px">Read and Write</div>
<div class="sep" style="top:248px"></div>
<div class="txt" style="left:9.5px;top:258px;letter-spacing:0.25px">repository</div>
<input type="radio" name="s7" style="left:249px;top:257px">
<div class="txt" style="left:268px;top:257px">No Access</div>
<input type="radio" name="s7" checked style="left:502px;top:257px">
<div class="txt" style="left:521px;top:257px">Read</div>
<input type="radio" name="s7" style="left:659px;top:257px">
<div class="txt" style="left:677px;top:257px;letter-spacing:-0.15px">Read and Write</div>
<div class="sep" style="top:283px"></div>
<div class="txt" style="left:9.5px;top:293px;letter-spacing:0.25px">user</div>
<input type="radio" name="s8" style="left:249px;top:293px">
<div class="txt" style="left:268px;top:292px">No Access</div>
<input type="radio" name="s8" checked style="left:502px;top:293px">
<div class="txt" style="left:521px;top:292px">Read</div>
<input type="radio" name="s8" style="left:659px;top:293px">
<div class="txt" style="left:677px;top:292px;letter-spacing:-0.15px">Read and Write</div></div>
  <div class="btn">Generate Token</div>
</div>
</div>
</body>
</html>
